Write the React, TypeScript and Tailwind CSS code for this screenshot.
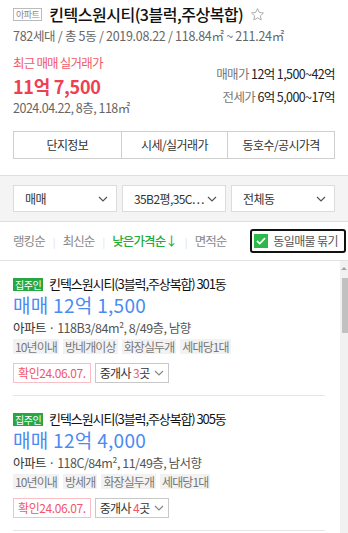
import React from "react";

const tabs = ["단지정보", "시세/실거래가", "동호수/공시가격"];
const selects = ["매매", "35B2평,35C…", "전체동"];

interface Listing {
  dong: string;
  price: string;
  info: string;
  tags: string[];
  agents: number;
}

const listings: Listing[] = [
  {
    dong: "301동",
    price: "매매 12억 1,500",
    info: "118B3/84m², 8/49층, 남향",
    tags: ["10년이내", "방네개이상", "화장실두개", "세대당1대"],
    agents: 3,
  },
  {
    dong: "305동",
    price: "매매 12억 4,000",
    info: "118C/84m², 11/49층, 남서향",
    tags: ["10년이내", "방세개", "화장실두개", "세대당1대"],
    agents: 4,
  },
];

function Chevron({ className = "" }: { className?: string }) {
  return (
    <svg width="10" height="6" viewBox="0 0 10 6" className={className}>
      <path d="M1 1l4 4 4-4" fill="none" stroke="currentColor" strokeWidth="1.2" />
    </svg>
  );
}

function ListingCard({ item }: { item: Listing }) {
  return (
    <div className="pt-[15px] pb-[12px] border-b border-[#e6e6e6]">
      <div className="flex items-center gap-[6px] h-[16px]">
        <span className="bg-[#26a744] text-white text-[10px] leading-[13px] h-[13px] px-[2px] tracking-[-0.5px]">
          집주인
        </span>
        <span className="text-[13px] text-[#111] tracking-[-1.1px]">
          킨텍스원시티(3블럭,주상복합) {item.dong}
        </span>
      </div>
      <div className="mt-[1px] text-[19px] leading-[24px] text-[#4a8bf2] tracking-[0.3px]">
        {item.price}
      </div>
      <div className="mt-[2px] text-[12.5px] leading-[18px] text-[#555] tracking-[-0.5px]">
        <span className="text-[#333]">아파트</span> · {item.info}
      </div>
      <div className="mt-[2px] flex gap-[4px]">
        {item.tags.map((t) => (
          <span
            key={t}
            className="bg-[#f2f2f2] text-[#777] text-[12px] leading-[15px] px-[2px] tracking-[-0.9px]"
          >
            {t}
          </span>
        ))}
      </div>
      <div className="mt-[9px] flex gap-[4px]">
        <span className="border border-[#f8bfc5] text-[#f2566a] text-[12px] leading-[18px] px-[4px] tracking-[-0.4px]">
          확인24.06.07.
        </span>
        <span className="border border-[#c8c8c8] text-[#333] text-[12px] leading-[18px] px-[4px] flex items-center gap-[4px] tracking-[-0.6px]">
          <span>
            중개사 <span className="text-[#f2566a]">{item.agents}</span>곳
          </span>
          <Chevron className="text-[#888]" />
        </span>
      </div>
    </div>
  );
}

export default function App() {
  return (
    <div className="w-[348px] h-[533px] overflow-hidden bg-white font-['Noto_Sans_CJK_KR','Noto_Sans',sans-serif] flex flex-col">
      {/* 단지 헤더 */}
      <div className="px-[13px] pt-[3px]">
        <div className="flex items-center gap-[7px] h-[22px]">
          <span className="border border-[#bbb] text-[#888] text-[9px] leading-[11px] px-[2px] tracking-[-0.5px]">
            아파트
          </span>
          <h1 className="text-[16px] text-[#111] tracking-[-0.5px] font-medium">
            킨텍스원시티(3블럭,주상복합)
          </h1>
          <svg width="15" height="15" viewBox="0 0 24 24" className="text-[#aaa]">
            <path
              d="M12 2.5l2.9 6.2 6.6.8-4.9 4.6 1.3 6.6L12 17.4l-5.9 3.3 1.3-6.6-4.9-4.6 6.6-.8z"
              fill="none"
              stroke="currentColor"
              strokeWidth="1.5"
              strokeLinejoin="round"
            />
          </svg>
        </div>
        <p className="mt-[2px] text-[12.5px] leading-[18px] text-[#666] tracking-[-0.3px]">
          782세대 / 총 5동 / 2019.08.22 / 118.84㎡ ~ 211.24㎡
        </p>
        <div className="mt-[9px] flex justify-between">
          <div>
            <div className="text-[12.5px] leading-[18px] text-[#f0596b] tracking-[-0.8px]">
              최근 매매 실거래가
            </div>
            <div className="mt-[3px] text-[18px] leading-[22px] font-bold text-[#ee3f53] tracking-[-0.3px]">
              11억 7,500
            </div>
            <div className="mt-[2px] text-[12.5px] leading-[18px] text-[#666] tracking-[-0.5px]">
              2024.04.22, 8층, 118㎡
            </div>
          </div>
          <div className="flex flex-col items-end pt-[11px] gap-[5px] text-[12.5px] leading-[18px] tracking-[-0.6px]">
            <div>
              <span className="text-[#777]">매매가</span>{" "}
              <span className="text-[#222]">12억 1,500~42억</span>
            </div>
            <div>
              <span className="text-[#777]">전세가</span>{" "}
              <span className="text-[#222]">6억 5,000~17억</span>
            </div>
          </div>
        </div>
        <div className="mt-[14px] grid grid-cols-3 border border-[#cfcfcf] h-[28px]">
          {tabs.map((t, i) => (
            <div
              key={t}
              className={`flex items-center justify-center text-[12px] text-[#333] tracking-[-0.6px] ${
                i > 0 ? "border-l border-[#cfcfcf]" : ""
              }`}
            >
              {t}
            </div>
          ))}
        </div>
      </div>

      {/* 필터 */}
      <div className="mt-[16px] bg-[#f4f4f4] border-y border-[#dedede] px-[13px] py-[9px] grid grid-cols-3 gap-[5px]">
        {selects.map((s) => (
          <div
            key={s}
            className="bg-white border border-[#dcdcdc] h-[27px] flex items-center justify-between pl-[11px] pr-[8px] text-[12px] text-[#333] tracking-[-0.6px]"
          >
            <span>{s}</span>
            <Chevron className="text-[#555]" />
          </div>
        ))}
      </div>

      {/* 정렬 */}
      <div className="flex items-center justify-between pl-[13px] pr-[2px] h-[39px] border-b border-[#e2e2e2]">
        <div className="flex items-center text-[12.5px] tracking-[-0.9px] text-[#888]">
          <span>랭킹순</span>
          <span className="mx-[8px] text-[#ddd] text-[10px]">|</span>
          <span>최신순</span>
          <span className="mx-[8px] text-[#ddd] text-[10px]">|</span>
          <span className="text-[#1fae3a] font-medium">낮은가격순↓</span>
          <span className="mx-[8px] text-[#ddd] text-[10px]">|</span>
          <span>면적순</span>
        </div>
        <div className="flex items-center gap-[5px] border-2 border-[#111] rounded-[3px] h-[24px] pl-[2px] pr-[6px]">
          <span className="w-[14px] h-[14px] bg-[#2db84a] flex items-center justify-center">
            <svg width="10" height="8" viewBox="0 0 10 8">
              <path d="M1 4l2.8 2.6L9 1.2" fill="none" stroke="white" strokeWidth="1.8" />
            </svg>
          </span>
          <span className="text-[12px] text-[#555] tracking-[-0.6px]">동일매물 묶기</span>
        </div>
      </div>

      {/* 매물 목록 */}
      <div className="flex flex-1 min-h-0">
        <div className="flex-1 pl-[13px] pr-[15px] overflow-hidden">
          {listings.map((l) => (
            <ListingCard key={l.dong} item={l} />
          ))}
        </div>
        <div className="w-[8px] bg-[#f1f1f1] flex flex-col items-end">
          <svg width="6" height="6" viewBox="0 0 6 6" className="mt-[4px] mr-[1px]">
            <path d="M0 5h6L3 2z" fill="#a3a3a3" />
          </svg>
          <div className="mt-[7px] w-[6px] h-[55px] bg-[#c1c1c1]" />
        </div>
      </div>
    </div>
  );
}
